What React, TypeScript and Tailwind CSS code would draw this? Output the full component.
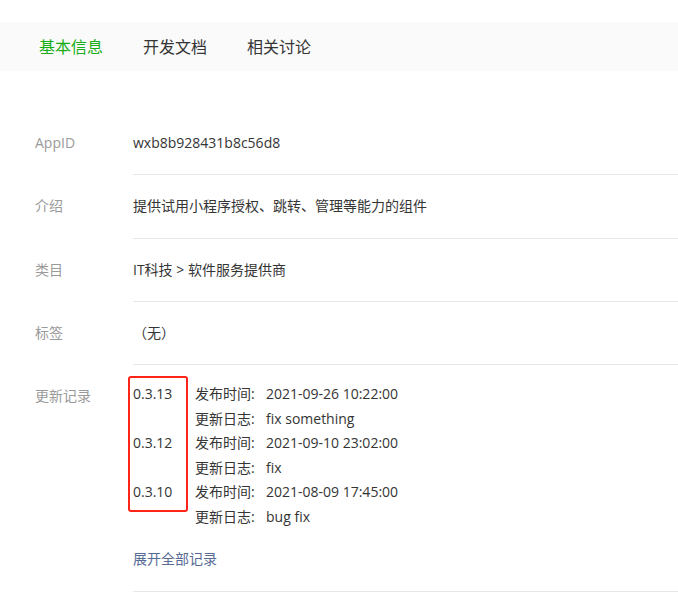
import React from "react";

const font = {
  fontFamily: '"Open Sans", "Noto Sans CJK SC", sans-serif',
};

const records = [
  { v: "0.3.13", time: "2021-09-26 10:22:00", log: "fix something" },
  { v: "0.3.12", time: "2021-09-10 23:02:00", log: "fix" },
  { v: "0.3.10", time: "2021-08-09 17:45:00", log: "bug fix" },
];

function Row({ label, children }: { label: string; children: React.ReactNode }) {
  return (
    <div className="flex">
      <div className="w-[133px] shrink-0 pl-[35px] pt-[21px] text-[14px] leading-[20.25px] text-[#9a9a9a]">{label}</div>
      <div className="flex-1 border-b border-[#e7e7e7] py-[21px] text-[14px] leading-[20.25px] text-[#353535]">{children}</div>
    </div>
  );
}

export default function App() {
  return (
    <div className="min-h-[614px] w-[678px] bg-white" style={font}>
      <div className="pt-[22px]">
        <div className="flex h-[49px] items-center gap-[40px] bg-[#fafafa] pl-[39px] text-[16px]">
          <span className="text-[#1aad19]">基本信息</span>
          <span className="text-[#353535]">开发文档</span>
          <span className="text-[#353535]">相关讨论</span>
        </div>
      </div>
      <div className="mt-[41px]">
        <Row label="AppID">wxb8b928431b8c56d8</Row>
        <Row label="介绍">提供试用小程序授权、跳转、管理等能力的组件</Row>
        <Row label="类目">IT科技 &gt; 软件服务提供商</Row>
        <Row label="标签">（无）</Row>
        <div className="flex">
          <div className="w-[133px] shrink-0 pl-[35px] pt-[21px] text-[14px] leading-[20px] text-[#9a9a9a]">更新记录</div>
          <div className="flex-1 border-b border-[#e7e7e7] pt-[17px] pb-[22px] text-[14px] text-[#353535]">
            <div className="relative">
              <div className="grid grid-cols-[62px_71px_1fr] leading-[24.5px]">
                {records.map((r) => (
                  <React.Fragment key={r.v}>
                    <span>{r.v}</span>
                    <span>发布时间:</span>
                    <span>{r.time}</span>
                    <span></span>
                    <span>更新日志:</span>
                    <span>{r.log}</span>
                  </React.Fragment>
                ))}
              </div>
              <div className="pointer-events-none absolute left-[-5px] top-[-6px] h-[136px] w-[60px] rounded-[3px] border-2 border-[#ff2418]" />
            </div>
            <div className="mt-[20px] leading-[20px] text-[#576b95]">展开全部记录</div>
          </div>
        </div>
      </div>
    </div>
  );
}
